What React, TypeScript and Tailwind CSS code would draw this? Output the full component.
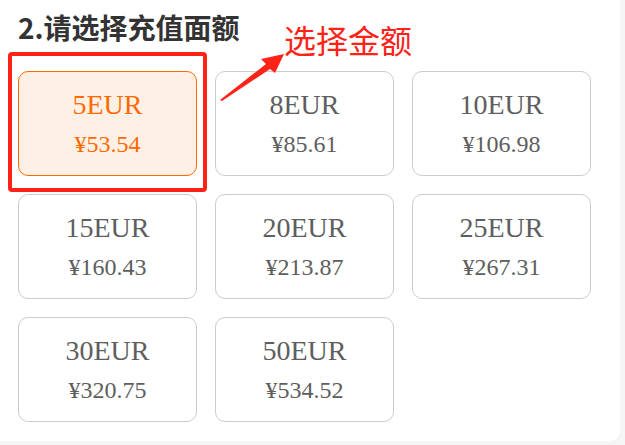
import React from 'react';

const options = [
  { eur: '5EUR', cny: '¥53.54' },
  { eur: '8EUR', cny: '¥85.61' },
  { eur: '10EUR', cny: '¥106.98' },
  { eur: '15EUR', cny: '¥160.43' },
  { eur: '20EUR', cny: '¥213.87' },
  { eur: '25EUR', cny: '¥267.31' },
  { eur: '30EUR', cny: '¥320.75' },
  { eur: '50EUR', cny: '¥534.52' },
];

export default function App() {
  const selected = 0;

  return (
    <div className="w-[625px] h-[445px] bg-[#f5f5f5] overflow-hidden">
      <div className="relative w-[620px] h-[441px] bg-white rounded-br-[10px] pl-[18px] pt-[7px]">
        <h2 className="text-[28px] leading-[40px] font-bold text-[#333] font-['Noto_Sans_CJK_SC',sans-serif]">
          2.请选择充值面额
        </h2>

        <div className="mt-[24px] grid grid-cols-[repeat(3,179px)] gap-x-[18px] gap-y-[18px]">
          {options.map((o, i) => {
            const active = i === selected;
            return (
              <div
                key={o.eur}
                className={
                  active
                    ? 'h-[105px] rounded-[10px] border border-[#ff6a00] bg-[#fff0e6] text-[#ff6a00] flex flex-col items-center justify-center font-["Liberation_Serif",serif]'
                    : 'h-[105px] rounded-[10px] border border-[#cccccc] bg-white text-[#5e5e5e] flex flex-col items-center justify-center font-["Liberation_Serif",serif]'
                }
              >
                <div className="text-[28px] leading-[36px]">{o.eur}</div>
                <div className="mt-[5px] text-[24px] leading-[32px]">{o.cny}</div>
              </div>
            );
          })}
        </div>

        {/* annotation overlay */}
        <div className="absolute left-[8px] top-[52px] w-[199px] h-[140px] border-[4px] border-[#ff2216] rounded-[4px]" />
        <svg className="absolute left-0 top-0" width="625" height="445" viewBox="0 0 625 445">
          <polygon points="220,100 266,64 261,59 284,54 275,73 270,69 222,101" fill="#ff2216" />
        </svg>
        <div className="absolute left-[284px] top-[23px] text-[32px] leading-[32px] text-[#ff2216] font-['Noto_Sans_CJK_SC',sans-serif]">
          选择金额
        </div>
      </div>
    </div>
  );
}
